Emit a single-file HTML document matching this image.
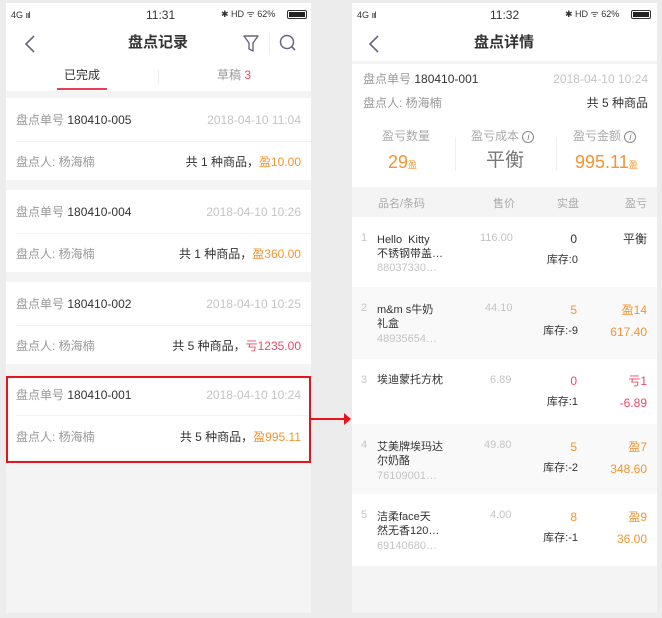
<!DOCTYPE html>
<html><head><meta charset="utf-8"><style>
*{margin:0;padding:0;box-sizing:border-box}
body{width:662px;height:618px;background:#ececec;position:relative;font-family:"Liberation Sans","Noto Sans CJK SC",sans-serif;overflow:hidden}
.ph{position:absolute;top:3px;width:305px;height:610px;background:#f4f4f4;overflow:hidden}
.a{position:absolute;white-space:nowrap;line-height:1}
.w{position:absolute;left:0;width:305px;background:#fff}
.g{color:#999}.d{color:#333}.l{color:#c4c4c4}.o{color:#f7932f}.r{color:#ee4863}
.f12{font-size:12px}.f11{font-size:11px}
.ra{text-align:right}
.bat{position:absolute;width:20px;height:9px;border:1px solid #333;border-radius:2px;padding:1px}
</style></head><body>

<!-- LEFT PHONE -->
<div class="ph" style="left:6px">
  <div class="w" style="top:0;height:88px"></div>
  <div class="a d" style="left:5px;top:8px;font-size:9px">4G <span style="letter-spacing:-1px">ııl</span></div>
  <div class="a d" style="left:140px;top:6px;font-size:12px">11:31</div>
  <div class="a d" style="left:215px;top:7px;font-size:9px">✱ HD ᯤ 62%</div>
  <div class="bat" style="left:281px;top:7px"><div style="width:100%;height:100%;background:#222"></div></div>
  <svg class="a" style="left:18px;top:32px" width="12" height="18"><path d="M10 1 L2 9 L10 17" fill="none" stroke="#666680" stroke-width="1.6"/></svg>
  <div class="a" style="left:122px;top:32px;font-size:15px;color:#333;font-weight:bold">盘点记录</div>
  <svg class="a" style="left:237px;top:31px" width="16" height="18"><path d="M1 2 H15 L10 9 V17 L6 15 V9 Z" fill="none" stroke="#666680" stroke-width="1.4" stroke-linejoin="round"/></svg>
  <div class="a" style="left:263px;top:30px;width:1px;height:20px;background:#eee"></div>
  <svg class="a" style="left:273px;top:31px" width="18" height="18"><circle cx="8" cy="8" r="6.5" fill="none" stroke="#666680" stroke-width="1.5"/><path d="M12.5 12.5 L16 16" stroke="#666680" stroke-width="1.6"/></svg>
  <div class="a f12 d" style="left:58px;top:66px">已完成</div>
  <div class="a" style="left:51px;top:85px;width:50px;height:2px;background:#ee3b5a"></div>
  <div class="a" style="left:152px;top:66px;width:1px;height:16px;background:#eee"></div>
  <div class="a f12 g" style="left:211px;top:66px">草稿 <span class="r">3</span></div>

  <div class="w" style="top:95px;height:82px"></div>
  <div class="w" style="top:187px;height:82px"></div>
  <div class="w" style="top:279px;height:82px"></div>
  <div class="w" style="top:373px;height:84px"></div>

  <div class="a f12" style="left:10px;top:111px"><span class="g">盘点单号</span> <span class="d">180410-005</span></div>
  <div class="a f12 l" style="right:10px;top:111px">2018-04-10 11:04</div>
  <div class="a" style="left:10px;right:0;top:138px;height:1px;background:#f2f2f2"></div>
  <div class="a f12 g" style="left:10px;top:153px">盘点人: 杨海楠</div>
  <div class="a f12 d" style="right:10px;top:153px">共 1 种商品，<span class="o">盈10.00</span></div>

  <div class="a f12" style="left:10px;top:203px"><span class="g">盘点单号</span> <span class="d">180410-004</span></div>
  <div class="a f12 l" style="right:10px;top:203px">2018-04-10 10:26</div>
  <div class="a" style="left:10px;right:0;top:230px;height:1px;background:#f2f2f2"></div>
  <div class="a f12 g" style="left:10px;top:245px">盘点人: 杨海楠</div>
  <div class="a f12 d" style="right:10px;top:245px">共 1 种商品，<span class="o">盈360.00</span></div>

  <div class="a f12" style="left:10px;top:295px"><span class="g">盘点单号</span> <span class="d">180410-002</span></div>
  <div class="a f12 l" style="right:10px;top:295px">2018-04-10 10:25</div>
  <div class="a" style="left:10px;right:0;top:322px;height:1px;background:#f2f2f2"></div>
  <div class="a f12 g" style="left:10px;top:337px">盘点人: 杨海楠</div>
  <div class="a f12 d" style="right:10px;top:337px">共 5 种商品，<span class="r">亏1235.00</span></div>

  <div class="a f12" style="left:10px;top:386px"><span class="g">盘点单号</span> <span class="d">180410-001</span></div>
  <div class="a f12 l" style="right:10px;top:386px">2018-04-10 10:24</div>
  <div class="a" style="left:10px;right:0;top:412px;height:1px;background:#f2f2f2"></div>
  <div class="a f12 g" style="left:10px;top:428px">盘点人: 杨海楠</div>
  <div class="a f12 d" style="right:10px;top:428px">共 5 种商品，<span class="o">盈995.11</span></div>
</div>
<div class="a" style="left:6px;top:376px;width:305px;height:87px;border:2px solid #e8141c"></div>
<div class="a" style="left:311px;top:418px;width:35px;height:2px;background:#e8141c"></div>
<div class="a" style="left:344px;top:413px;width:0;height:0;border-left:7px solid #e8141c;border-top:6px solid transparent;border-bottom:6px solid transparent"></div>

<!-- RIGHT PHONE -->
<div class="ph" style="left:352px">
  <div class="w" style="top:0;height:58px"></div>
  <div class="a d" style="left:5px;top:8px;font-size:9px">4G <span style="letter-spacing:-1px">ııl</span></div>
  <div class="a d" style="left:138px;top:6px;font-size:12px">11:32</div>
  <div class="a d" style="left:213px;top:7px;font-size:9px">✱ HD ᯤ 62%</div>
  <div class="bat" style="left:279px;top:7px"><div style="width:100%;height:100%;background:#222"></div></div>
  <svg class="a" style="left:16px;top:32px" width="12" height="18"><path d="M10 1 L2 9 L10 17" fill="none" stroke="#666680" stroke-width="1.6"/></svg>
  <div class="a" style="left:122px;top:32px;font-size:15px;color:#333;font-weight:bold">盘点详情</div>

  <div class="w" style="top:61px;height:123px"></div>
  <div class="a f12" style="left:11px;top:70px"><span class="g">盘点单号</span> <span class="d">180410-001</span></div>
  <div class="a f12 l" style="right:9px;top:70px">2018-04-10 10:24</div>
  <div class="a f12 g" style="left:11px;top:94px">盘点人: 杨海楠</div>
  <div class="a f12 d" style="right:9px;top:94px">共 5 种商品</div>

  <div class="a f12 l" style="left:30px;top:127px;color:#aaa">盈亏数量</div>
  <div class="a o" style="left:36px;top:150px;font-size:18px">29<span style="font-size:9px">盈</span></div>
  <div class="a" style="left:103px;top:134px;width:1px;height:34px;background:#f0f0f0"></div>
  <div class="a f12" style="left:119px;top:127px;color:#aaa">盈亏成本 <span style="display:inline-block;width:12px;height:12px;border:1px solid #888;border-radius:50%;font-size:9px;text-align:center;line-height:10px;font-style:italic;color:#777">i</span></div>
  <div class="a" style="left:134px;top:148px;font-size:19px;color:#777">平衡</div>
  <div class="a" style="left:204px;top:134px;width:1px;height:34px;background:#f0f0f0"></div>
  <div class="a f12" style="left:221px;top:127px;color:#aaa">盈亏金额 <span style="display:inline-block;width:12px;height:12px;border:1px solid #888;border-radius:50%;font-size:9px;text-align:center;line-height:10px;font-style:italic;color:#777">i</span></div>
  <div class="a o" style="left:223px;top:150px;font-size:18px">995.11<span style="font-size:9px">盈</span></div>

  <div class="a f11" style="left:26px;top:196px;color:#aaa">品名/条码</div>
  <div class="a f11" style="left:141px;top:196px;color:#aaa">售价</div>
  <div class="a f11" style="left:205px;top:196px;color:#aaa">实盘</div>
  <div class="a f11" style="left:273px;top:196px;color:#aaa">盈亏</div>

  <div class="w" style="top:214px;height:70px"></div>
  <div class="w" style="top:284px;height:72px;background:#f9f9f9"></div>
  <div class="w" style="top:356px;height:65px"></div>
  <div class="w" style="top:421px;height:70px;background:#f9f9f9"></div>
  <div class="w" style="top:491px;height:72px"></div>

  <div class="a f11 l" style="left:9px;top:230px">1</div>
  <div class="a f11 d" style="left:25px;top:230px;line-height:14px">Hello&nbsp; Kitty<br>不锈钢带盖…</div>
  <div class="a f11 l" style="left:25px;top:260px">88037330…</div>
  <div class="a f11 l" style="left:128px;top:230px">116.00</div>
  <div class="a f12 d ra" style="right:80px;top:230px">0</div>
  <div class="a f11 d" style="right:79px;top:252px">库存:0</div>
  <div class="a f12 d" style="right:10px;top:230px">平衡</div>

  <div class="a f11 l" style="left:9px;top:300px">2</div>
  <div class="a f11 d" style="left:25px;top:300px;line-height:14px">m&amp;m s牛奶<br>礼盒</div>
  <div class="a f11 l" style="left:25px;top:331px">48935654…</div>
  <div class="a f11 l" style="left:133px;top:300px">44.10</div>
  <div class="a f12 o" style="right:80px;top:301px">5</div>
  <div class="a f11 d" style="right:79px;top:323px">库存:-9</div>
  <div class="a f12 o" style="right:10px;top:301px">盈14</div>
  <div class="a f12 o" style="right:10px;top:323px">617.40</div>

  <div class="a f11 l" style="left:9px;top:372px">3</div>
  <div class="a f11 d" style="left:25px;top:372px">埃迪蒙托方枕</div>
  <div class="a f11 l" style="left:138px;top:372px">6.89</div>
  <div class="a f12 r" style="right:80px;top:372px">0</div>
  <div class="a f11 d" style="right:79px;top:394px">库存:1</div>
  <div class="a f12 r" style="right:10px;top:372px">亏1</div>
  <div class="a f12 r" style="right:10px;top:394px">-6.89</div>

  <div class="a f11 l" style="left:9px;top:437px">4</div>
  <div class="a f11 d" style="left:25px;top:437px;line-height:14px">艾美牌埃玛达<br>尔奶酪</div>
  <div class="a f11 l" style="left:25px;top:468px">76109001…</div>
  <div class="a f11 l" style="left:132px;top:437px">49.80</div>
  <div class="a f12 o" style="right:80px;top:438px">5</div>
  <div class="a f11 d" style="right:79px;top:460px">库存:-2</div>
  <div class="a f12 o" style="right:10px;top:438px">盈7</div>
  <div class="a f12 o" style="right:10px;top:460px">348.60</div>

  <div class="a f11 l" style="left:9px;top:507px">5</div>
  <div class="a f11 d" style="left:25px;top:507px;line-height:14px">洁柔face天<br>然无香120…</div>
  <div class="a f11 l" style="left:25px;top:538px">69140680…</div>
  <div class="a f11 l" style="left:138px;top:507px">4.00</div>
  <div class="a f12 o" style="right:80px;top:508px">8</div>
  <div class="a f11 d" style="right:79px;top:530px">库存:-1</div>
  <div class="a f12 o" style="right:10px;top:508px">盈9</div>
  <div class="a f12 o" style="right:10px;top:530px">36.00</div>
</div>
</body></html>
